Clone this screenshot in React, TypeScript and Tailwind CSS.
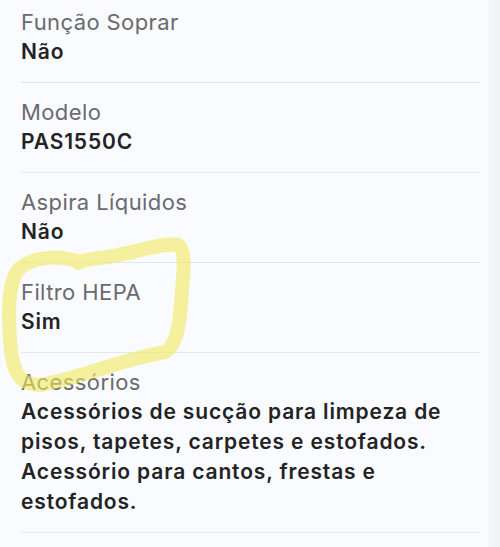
import React from "react";

const rows: { label: string; value: string }[] = [
  { label: "Função Soprar", value: "Não" },
  { label: "Modelo", value: "PAS1550C" },
  { label: "Aspira Líquidos", value: "Não" },
  { label: "Filtro HEPA", value: "Sim" },
  {
    label: "Acessórios",
    value:
      "Acessórios de sucção para limpeza de pisos, tapetes, carpetes e estofados. Acessório para cantos, frestas e estofados.",
  },
];

export default function App() {
  return (
    <div
      className="relative w-[500px] h-[547px] overflow-hidden bg-[#fafbfe] flex"
      style={{ fontFamily: "Inter, 'Noto Sans', sans-serif" }}
    >
      <div className="w-[488px] pl-[21px] pr-[8px] -mt-[7px]">
        {rows.map((r, i) => (
          <div key={i} className="pt-[14px] pb-[15px] border-b border-[#e5e6ea]">
            <div className="text-[22px] leading-[30px] tracking-[0.4px] text-[#6a6a6e] font-normal">{r.label}</div>
            <div className="text-[21px] leading-[30px] tracking-[0.85px] text-[#232325] font-semibold">{r.value}</div>
          </div>
        ))}
      </div>
      <div className="flex-1 bg-gradient-to-r from-[#f7f8fb] to-[#f0f1f5]" />
      <svg className="absolute left-0 top-0 pointer-events-none" width="500" height="547">
        <path
          d="M 80 262 C 60 255 35 256 20 268 C 8 280 8 310 10 340 C 12 370 18 385 40 385 C 80 378 120 360 165 352 C 178 345 180 320 182 290 C 184 270 186 250 178 245 C 160 242 130 255 100 258 C 90 259 82 261 78 263"
          fill="none"
          stroke="#f0ea5c"
          strokeOpacity="0.6"
          strokeWidth="14"
          strokeLinecap="round"
          strokeLinejoin="round"
        />
      </svg>
    </div>
  );
}
